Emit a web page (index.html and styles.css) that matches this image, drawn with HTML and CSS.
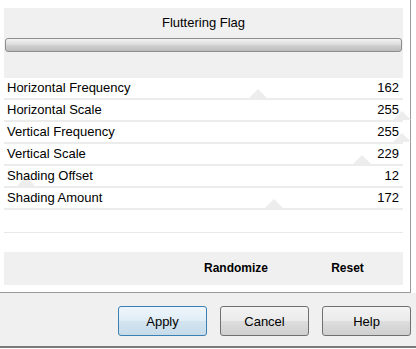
FILE: index.html
```html
<!DOCTYPE html>
<html lang="en">
<head>
	<meta charset="UTF-8">
	<title>Fluttering Flag</title>
	<link rel="stylesheet" href="styles.css">
</head>
<body>
	<div class="frame">
		<div class="panel">
			<div class="head">
				<div class="title">Fluttering Flag</div>
				<div class="bar"></div>
			</div>
			<div class="rows">
				<div class="row"><span class="thumb" style="left: 254px"></span><span class="label">Horizontal Frequency</span><span class="val">162</span></div>
				<div class="row"><span class="thumb" style="left: 398px"></span><span class="label">Horizontal Scale</span><span class="val">255</span></div>
				<div class="row"><span class="thumb" style="left: 398px"></span><span class="label">Vertical Frequency</span><span class="val">255</span></div>
				<div class="row"><span class="thumb" style="left: 358px"></span><span class="label">Vertical Scale</span><span class="val">229</span></div>
				<div class="row"><span class="thumb" style="left: 22px"></span><span class="label">Shading Offset</span><span class="val">12</span></div>
				<div class="row"><span class="thumb" style="left: 270px"></span><span class="label">Shading Amount</span><span class="val">172</span></div>
			</div>
			<div class="rule"></div>
			<div class="tools">
				<span></span>
				<span class="tool">Randomize</span>
				<span class="tool">Reset</span>
			</div>
		</div>
	</div>
	<div class="buttons">
		<button class="btn default">Apply</button>
		<button class="btn">Cancel</button>
		<button class="btn">Help</button>
	</div>
</body>
</html>
```

FILE: styles.css
```css
* {
	margin: 0;
	padding: 0;
	box-sizing: border-box;
}
body {
	width: 416px;
	height: 349px;
	overflow: hidden;
	background-color: #fff;
	font-family: "Liberation Sans", Arial, sans-serif;
	font-size: 13px;
	color: #000;
}

.frame {
	width: 411px;
	height: 293px;
	padding: 8px 7px 0 4px;
	border-right: 1px solid #9a9a9a;
	border-bottom: 1px solid #9a9a9a;
}

.panel {
	display: flex;
	flex-direction: column;
	width: 399px;
}

.head {
	height: 70px;
	padding: 7px 1px 0;
	background-color: #f0f0f0;
}
.title {
	height: 16px;
	line-height: 16px;
	text-align: center;
}
.bar {
	height: 14px;
	margin-top: 7px;
	border: 1px solid #8e8e8e;
	border-radius: 3px;
	background: linear-gradient(#f4f4f4, #dcdcdc 45%, #cdcdcd 60%, #bdbdbd);
}

.row {
	position: relative;
	display: flex;
	justify-content: space-between;
	height: 22px;
	padding: 0 4px 0 3px;
	line-height: 19px;
	border-bottom: 2px solid #ececec;
}
.row .thumb {
	position: absolute;
	bottom: 0;
	width: 0;
	height: 0;
	transform: translateX(-50%);
	border-left: 9px solid transparent;
	border-right: 9px solid transparent;
	border-bottom: 9px solid #ededed;
}
.row .label,
.row .val {
	position: relative;
}

.rule {
	height: 1px;
	margin-top: 22px;
	background-color: #e8e8e8;
}

.tools {
	display: grid;
	grid-template-columns: 1fr 112px 111px;
	height: 33px;
	margin-top: 19px;
	background-color: #f0f0f0;
	font-size: 12px;
	font-weight: bold;
	line-height: 33px;
}
.tool {
	text-align: center;
}

.buttons {
	display: flex;
	justify-content: flex-end;
	gap: 13px;
	height: 55px;
	padding: 13px 5px 0 0;
	background-color: #f0f0f0;
	border-bottom: 2px solid #7a7a7a;
}
.btn {
	width: 89px;
	height: 30px;
	font-family: "Liberation Sans", Arial, sans-serif;
	font-size: 13px;
	color: #000;
	border: 1px solid #707070;
	border-radius: 3px;
	background: linear-gradient(#f3f3f3, #ebebeb 48%, #dddddd 52%, #cfcfcf);
}
.btn.default {
	border-color: #3c7fb1;
	background: linear-gradient(#eef6fb, #e0edf6 48%, #d2e4f0 52%, #c6dbe9);
}
```
